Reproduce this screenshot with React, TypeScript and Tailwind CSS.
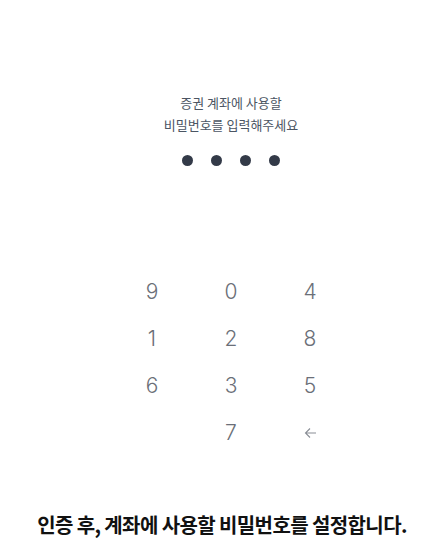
const KEYS = ['9', '0', '4', '1', '2', '8', '6', '3', '5', '', '7', 'back'];

export default function App() {
  return (
    <div
      className="w-[444px] h-[549px] bg-white flex flex-col items-center"
      style={{ fontFamily: 'Inter, "Noto Sans CJK KR", sans-serif' }}
    >
      {/* Prompt */}
      <div className="pl-[18px] pt-[92px] flex flex-col items-center">
        <p
          className="text-[13px] leading-[22px] text-[#4b5563] text-center"
          style={{ fontFamily: '"Noto Sans CJK KR", sans-serif' }}
        >
          증권 계좌에 사용할
          <br />
          비밀번호를 입력해주세요
        </p>
        <div className="mt-[19px] flex gap-[18px]">
          {[0, 1, 2, 3].map((i) => (
            <span key={i} className="w-[11px] h-[11px] rounded-full bg-[#333a48]" />
          ))}
        </div>

        {/* Keypad */}
        <div className="mt-[102px] grid grid-cols-[79px_79px_79px] auto-rows-[47px]">
          {KEYS.map((k, i) => (
            <div
              key={i}
              className="flex items-center justify-center text-[21px] font-light text-[#6b6f78]"
            >
              {k === 'back' ? (
                <svg width="13" height="12" viewBox="0 0 13 12" fill="none" stroke="#8a8e96" strokeWidth="1.1">
                  <path d="M12 6H1.5M6 1.5L1.5 6L6 10.5" />
                </svg>
              ) : (
                k
              )}
            </div>
          ))}
        </div>
      </div>

      {/* Footer note */}
      <p
        className="mt-auto mb-[10px] text-[20px] leading-[28px] font-bold text-[#111] tracking-[-0.6px]"
        style={{ fontFamily: '"Noto Sans CJK KR", sans-serif' }}
      >
        인증 후, 계좌에 사용할 비밀번호를 설정합니다.
      </p>
    </div>
  );
}
